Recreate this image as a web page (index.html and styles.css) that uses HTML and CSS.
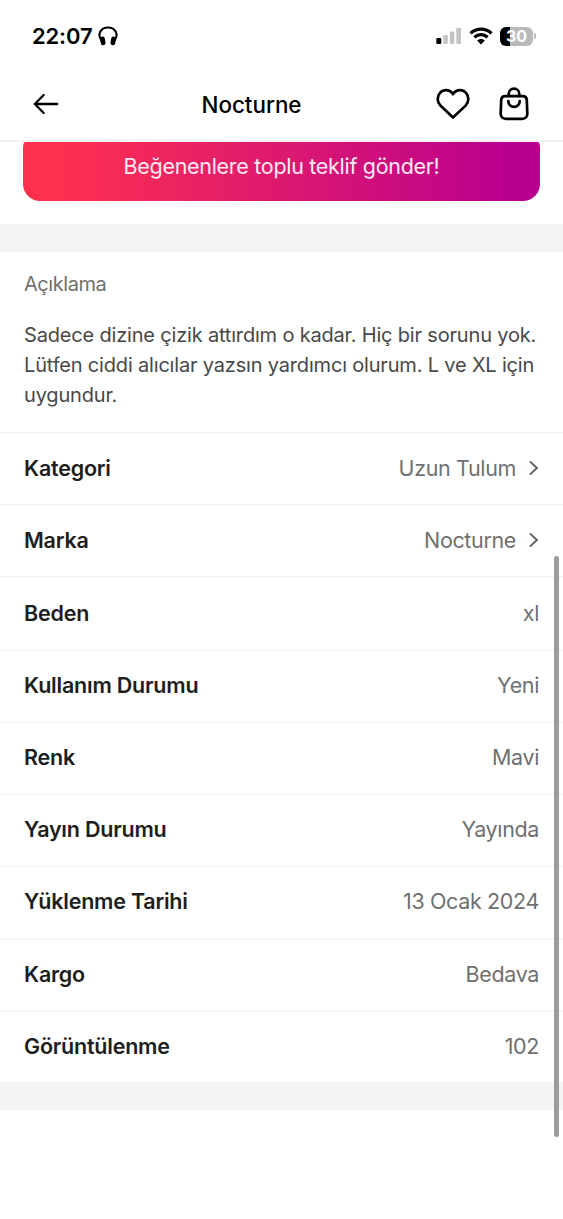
FILE: index.html
```html
<!DOCTYPE html>
<html lang="tr">
<head>
<meta charset="utf-8">
<title>Nocturne</title>
<link rel="stylesheet" href="styles.css">
</head>
<body>
<header class="top">
  <div class="status">
    <div class="status-left">
      <span class="clock">22:07</span>
      <svg class="headphones" width="20" height="20" viewBox="0 0 20 20"><path d="M3.500 14.500C-1.500 7.500 3.600 1.500 10 1.500S21.500 7.500 16.500 14.500" fill="none" stroke="#000" stroke-width="2.100"/><rect x="2.400" y="10.600" width="4.800" height="8.600" rx="2" transform="rotate(-10 4.800 15)"/><rect x="12.800" y="10.600" width="4.800" height="8.600" rx="2" transform="rotate(10 15.200 15)"/></svg>
    </div>
    <div class="status-right">
      <svg width="26" height="18" viewBox="0 0 26 18"><rect x="0.300" y="11" width="5" height="6" rx="1.300"/><g fill="#c4c4c4"><rect x="7.300" y="8" width="4.600" height="9" rx="1.300"/><rect x="13.800" y="4.500" width="4.600" height="12.500" rx="1.300"/><rect x="20.300" y="1" width="4.700" height="16" rx="1.300"/></g></svg>
      <svg class="wifi" width="24" height="18" viewBox="0 0 24 18"><g fill="none" stroke="#000" stroke-width="3.200"><path d="M1.500 6.300C7.500.700 16.500.700 22.500 6.300"/><path d="M5.400 10.300c3.900-3.500 9.300-3.500 13.200 0"/></g><path d="M12 17.600 8.100 13.600c2.200-2.100 5.600-2.100 7.800 0z"/></svg>
      <div class="battery"><span class="battery-body">30</span><span class="battery-tip"></span></div>
    </div>
  </div>
  <nav class="nav">
    <svg class="back" width="26" height="22" viewBox="0 0 26 22"><path d="M10.700 2 1.800 11l8.900 9M2 11h22.200" fill="none" stroke="#000" stroke-width="2.300" stroke-linecap="round" stroke-linejoin="round"/></svg>
    <h1 class="title">Nocturne</h1>
    <div class="actions">
      <svg width="34" height="32" viewBox="0 0 34 32"><path d="M17 29.500 4.400 17.600C1 14.300.700 8.400 4 4.800c3.400-3.800 9.500-3.500 12.200.2L17 6.200l.8-1.200c2.700-3.700 8.800-4 12.200-.200 3.300 3.600 3 9.500-.4 12.800z" fill="none" stroke="#000" stroke-width="2.700" stroke-linejoin="round"/></svg>
      <svg width="32" height="36" viewBox="0 0 32 36"><g fill="none" stroke="#000" stroke-width="2.700" stroke-linecap="round"><path d="M7.500 10.200h17c2.500 0 4.200 1.500 4.300 4l.5 13.300c.1 3.400-1.800 5.300-5.200 5.300H7.900c-3.400 0-5.300-1.900-5.200-5.300l.5-13.300c.1-2.500 1.800-4 4.300-4z"/><path d="M10.700 10V8a5.300 5.300 0 0 1 10.600 0V10M10.300 15.200a5.700 5.700 0 0 0 11.400 0"/></g></svg>
    </div>
  </nav>
</header>
<main>
  <section class="offer"><button class="offer-button">Beğenenlere toplu teklif gönder!</button></section>
  <div class="band"></div>
  <section class="about">
    <h2 class="about-title">Açıklama</h2>
    <p class="about-text">Sadece dizine çizik attırdım o kadar. Hiç bir sorunu yok.<br>Lütfen ciddi alıcılar yazsın yardımcı olurum. L ve XL için<br>uygundur.</p>
  </section>
  <dl class="details">
    <div class="row"><dt>Kategori</dt><dd>Uzun Tulum<svg class="chevron" width="10" height="14" viewBox="0 0 10 14"><path d="m1.500 1 6.500 6-6.500 6"/></svg></dd></div>
    <div class="row"><dt>Marka</dt><dd>Nocturne<svg class="chevron" width="10" height="14" viewBox="0 0 10 14"><path d="m1.500 1 6.500 6-6.500 6"/></svg></dd></div>
    <div class="row"><dt>Beden</dt><dd>xl</dd></div>
    <div class="row"><dt>Kullanım Durumu</dt><dd>Yeni</dd></div>
    <div class="row"><dt>Renk</dt><dd>Mavi</dd></div>
    <div class="row"><dt>Yayın Durumu</dt><dd>Yayında</dd></div>
    <div class="row"><dt>Yüklenme Tarihi</dt><dd>13 Ocak 2024</dd></div>
    <div class="row"><dt>Kargo</dt><dd>Bedava</dd></div>
    <div class="row"><dt>Görüntülenme</dt><dd>102</dd></div>
  </dl>
  <div class="band"></div>
</main>
<div class="scrollbar"></div>
</body>
</html>
```
FILE: styles.css
```css
* { box-sizing: border-box; }
body {
  margin: 0;
  height: 1219px;
  position: relative;
  overflow: hidden;
  background: #fff;
  color: #1e1e1e;
  font-family: Inter, "Liberation Sans", sans-serif;
}
h1, h2, p, dl, dt, dd { margin: 0; }
svg { display: block; flex: none; }

.top { height: 142px; border-bottom: 2px solid #f2f2f2; }
.status {
  height: 72px;
  padding: 0 27px 0 32px;
  display: flex;
  align-items: center;
  justify-content: space-between;
}
.status-left { display: flex; align-items: center; gap: 6px; }
.clock { font-size: 22px; font-weight: 600; letter-spacing: -0.15px; color: #000; }
.status-right { display: flex; align-items: center; }
.wifi { margin-left: 7px; }
.battery { display: flex; align-items: center; gap: 1px; margin-left: 7px; }
.battery-body {
  width: 33px;
  height: 19px;
  border-radius: 6px;
  background: linear-gradient(90deg, #000 10px, #b9b9b9 10px);
  color: #fff;
  font-size: 16px;
  font-weight: 700;
  line-height: 19px;
  text-align: center;
}
.battery-tip { width: 2px; height: 6px; border-radius: 0 2px 2px 0; background: #b9b9b9; }

.nav {
  height: 64px;
  padding: 0 33px;
  display: grid;
  grid-template-columns: 1fr auto 1fr;
  align-items: center;
}
.title { font-size: 22.4px; font-weight: 500; color: #000; margin-right: 60px; }
.actions { display: flex; align-items: center; justify-content: flex-end; gap: 28px; }

.offer { height: 82px; padding: 0 23px; }
.offer-button {
  display: block;
  width: 100%;
  height: 59px;
  padding: 0 0 12px;
  border: 0;
  border-radius: 2px 2px 17px 17px / 6px 6px 17px 17px;
  background: linear-gradient(90deg, #ff314f 6%, #ba008f 94%);
  color: #ffe9f5;
  font: 400 21.5px Inter, "Liberation Sans", sans-serif;
  letter-spacing: -0.3px;
}
.band { height: 28px; background: #f4f4f4; }

.about { height: 180px; padding: 18px 24px 0; }
.about-title { font-size: 20px; font-weight: 400; line-height: 28px; letter-spacing: -0.45px; color: #707070; }
.about-text { margin-top: 22px; font-size: 20px; line-height: 30px; letter-spacing: -0.18px; color: #484848; white-space: nowrap; }

.details { height: 650px; display: grid; grid-template-rows: repeat(9, 1fr); }
.row {
  padding: 0 24px 2px;
  border-top: 2px solid #f5f5f5;
  display: flex;
  align-items: center;
  justify-content: space-between;
}
.row dt { font-size: 21.5px; font-weight: 600; letter-spacing: -0.22px; }
.row dd { display: flex; align-items: center; gap: 13px; font-size: 21.5px; letter-spacing: -0.36px; color: #707070; }
.chevron path { fill: none; stroke: #666; stroke-width: 2; stroke-linecap: round; stroke-linejoin: round; }

.scrollbar { position: absolute; top: 556px; right: 4px; width: 5px; height: 581px; border-radius: 3px; background: #9d9d9d; }
```
